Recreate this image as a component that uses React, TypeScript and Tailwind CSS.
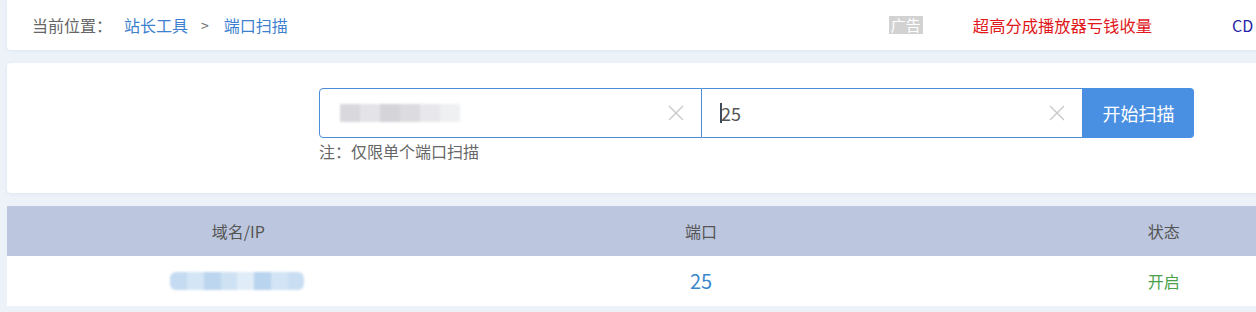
import React from 'react';

const font = 'font-["Microsoft_YaHei","Noto_Sans_CJK_SC",sans-serif]';

const ClearIcon = () => (
  <svg width="18" height="18" viewBox="0 0 18 18" className="shrink-0">
    <path d="M2 2 L16 16 M16 2 L2 16" stroke="#c8c8c8" strokeWidth="1.4" fill="none" />
  </svg>
);

const BlurBlocks = ({ colors, className }: { colors: string[]; className: string }) => (
  <div className={`flex blur-[1px] ${className}`}>
    {colors.map((c, i) => (
      <div key={i} className="h-full flex-1" style={{ backgroundColor: c }} />
    ))}
  </div>
);

export default function App() {
  return (
    <div className={`w-full h-[312px] overflow-hidden bg-[#edf2f9] ${font}`}>
      <div className="w-[1388px] ml-[7px]">
        {/* breadcrumb bar */}
        <div className="h-[50px] bg-white rounded-b shadow-[0_1px_3px_rgba(180,195,220,0.25)] flex items-center pl-[25px] text-[16px]">
          <span className="text-[#666]">当前位置：</span>
          <span className="ml-[12px] text-[#3d7fcf]">站长工具</span>
          <span className="ml-[13px] text-[#666] text-[14px]">&gt;</span>
          <span className="ml-[15px] text-[#3d7fcf]">端口扫描</span>
          <span className="ml-[601px] bg-[#d2d2d2] text-white text-[15px] leading-[18px] px-[2px] h-[18px]">广告</span>
          <span className="ml-[50px] text-[#e0181b] text-[16.3px]">超高分成播放器亏钱收量</span>
          <span className="ml-[80px] text-[#2424a8]">CD</span>
        </div>

        {/* search card */}
        <div className="mt-[13px] h-[130px] bg-white rounded shadow-[0_1px_3px_rgba(180,195,220,0.25)] pl-[312px] pt-[25px]">
          <div className="flex h-[50px]">
            <div className="w-[383px] h-full border border-[#4b8dd6] rounded-l flex items-center pl-[20px] pr-[16px]">
              <BlurBlocks
                className="w-[120px] h-[18px]"
                colors={['#d9d9dd', '#e4e4e8', '#d4d4d9', '#dcdce0', '#e8e8ec', '#eef0f2']}
              />
              <div className="flex-1" />
              <ClearIcon />
            </div>
            <div className="w-[381px] h-full border border-l-0 border-[#4b8dd6] flex items-center pl-[18px] pr-[16px]">
              <span className="w-[2px] h-[20px] bg-[#3c4a5c]" />
              <span className="text-[18px] text-[#555] -ml-[1px]">25</span>
              <div className="flex-1" />
              <ClearIcon />
            </div>
            <button className="w-[111px] h-full bg-[#4a90e2] text-white text-[18px] rounded-r">开始扫描</button>
          </div>
          <div className="mt-[2px] text-[16px] text-[#666] leading-[22px]">注：仅限单个端口扫描</div>
        </div>

        {/* result table */}
        <div className="mt-[13px] bg-white">
          <div className="grid grid-cols-3 h-[50px] bg-[#bcc6de] text-[16px] text-[#555] items-center text-center">
            <div>域名/IP</div>
            <div>端口</div>
            <div>状态</div>
          </div>
          <div className="grid grid-cols-3 h-[50px] items-center text-center">
            <div className="flex justify-center">
              <BlurBlocks
                className="w-[134px] h-[18px] rounded-[6px] overflow-hidden -ml-[2px]"
                colors={['#c4dbf1', '#d4e5f5', '#bcd6ef', '#cfe2f4', '#e0ecf7', '#b9d4ee', '#d2e4f5', '#c9def3']}
              />
            </div>
            <div className="text-[20px] text-[#3a87cc]">25</div>
            <div className="text-[16px] text-[#4aa14a]">开启</div>
          </div>
        </div>
      </div>
    </div>
  );
}
